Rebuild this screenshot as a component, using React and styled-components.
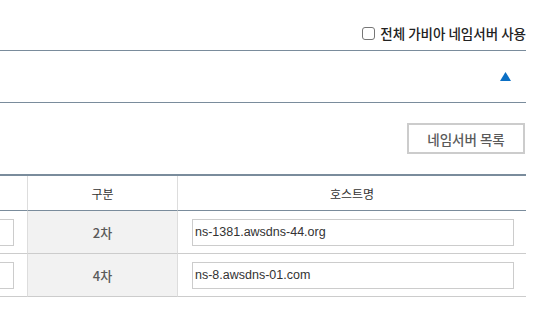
import React from 'react';
import styled, { createGlobalStyle } from 'styled-components';

const GlobalStyle = createGlobalStyle`
  html, body {
    margin: 0;
    padding: 0;
    background: #ffffff;
    overflow: hidden;
  }
  body {
    font-family: "Noto Sans", "Noto Sans CJK KR", sans-serif;
    color: #333333;
  }
`

const Page = styled.div`
  width: 539px;
  height: 322px;
  overflow: hidden;
  display: flex;
  justify-content: flex-end;
  padding-right: 13px;
  box-sizing: border-box;
`

const Panel = styled.div`
  width: 800px;
  flex-shrink: 0;
  display: flex;
  flex-direction: column;
`

const TopBar = styled.div`
  height: 51px;
  box-sizing: border-box;
  padding-top: 21px;
  border-bottom: 1px solid #7a8c9c;
  display: flex;
  justify-content: flex-end;
  align-items: flex-start;
`

const CheckLabel = styled.label`
  display: flex;
  align-items: center;
  height: 24px;
  gap: 5px;
  font-family: "Noto Sans CJK KR", "Noto Sans", sans-serif;
  font-size: 13.5px;
  font-weight: 500;
  color: #222222;

  & > span {
    width: 13px;
    height: 13px;
    box-sizing: border-box;
    border: 1px solid #767676;
    border-radius: 3px;
    background: #fff;
  }
`

const FoldHeader = styled.div`
  height: 52px;
  box-sizing: border-box;
  border-bottom: 1px solid #7a8c9c;
  display: flex;
  justify-content: flex-end;
  align-items: center;
  padding-right: 15px;
`

const Toolbar = styled.div`
  display: flex;
  justify-content: flex-end;
  padding: 20px 1px 20px 0;
`

const Button = styled.button`
  width: 118px;
  height: 31px;
  box-sizing: border-box;
  border: 2px solid #cccccc;
  background: #ffffff;
  font-family: "Noto Sans CJK KR", "Noto Sans", sans-serif;
  font-size: 13.5px;
  font-weight: 500;
  color: #5a5a5a;
  padding: 0;
`

const Grid = styled.div`
  display: grid;
  grid-template-columns: 302px 150px 348px;
  border-top: 2px solid #7a8c9c;
`

const HeadCell = styled.div`
  height: 35px;
  box-sizing: border-box;
  border-bottom: 1px solid #7a8c9c;
  border-right: ${p => (p.last ? 'none' : '1px solid #dddddd')};
  display: flex;
  align-items: center;
  justify-content: center;
  font-family: "Noto Sans CJK KR", "Noto Sans", sans-serif;
  font-size: 12px;
  color: #333333;
`

const Cell = styled.div`
  height: 43px;
  box-sizing: border-box;
  border-bottom: 1px solid #cccccc;
  border-right: ${p => (p.last ? 'none' : '1px solid #dddddd')};
  background: ${p => (p.shaded ? '#f2f2f2' : '#ffffff')};
  display: flex;
  align-items: center;
  justify-content: ${p => (p.center ? 'center' : 'flex-start')};
  padding: ${p => p.pad || '0'};
  font-family: "Noto Sans CJK KR", "Noto Sans", sans-serif;
  font-size: 13px;
  font-weight: 500;
  color: #5a5a5a;
`

const TextInput = styled.input`
  width: 100%;
  height: 27px;
  box-sizing: border-box;
  border: 1px solid #cccccc;
  padding: 0 2px;
  font-family: "Liberation Sans", Arial, sans-serif;
  font-size: 12.5px;
  color: #333333;
  background: #fff;
  outline: none;
`

const rows = [
  { order: '2차', host: 'ns-1381.awsdns-44.org' },
  { order: '4차', host: 'ns-8.awsdns-01.com' },
]

export default function App() {
  return (
    <Page>
      <GlobalStyle />
      <Panel>
        <TopBar>
          <CheckLabel>
            <span />
            전체 가비아 네임서버 사용
          </CheckLabel>
        </TopBar>
        <FoldHeader>
          <svg width="11" height="9" viewBox="0 0 11 9">
            <polygon points="5.5,0 11,9 0,9" fill="#0b6fc4" />
          </svg>
        </FoldHeader>
        <Toolbar>
          <Button>네임서버 목록</Button>
        </Toolbar>
        <Grid>
          <HeadCell />
          <HeadCell>구분</HeadCell>
          <HeadCell last>호스트명</HeadCell>
          {rows.map((row, i) => (
            <React.Fragment key={i}>
              <Cell pad="0 13px 0 14px">
                <TextInput defaultValue="" readOnly />
              </Cell>
              <Cell shaded center>{row.order}</Cell>
              <Cell last pad="0 12px 0 14px">
                <TextInput defaultValue={row.host} readOnly />
              </Cell>
            </React.Fragment>
          ))}
        </Grid>
      </Panel>
    </Page>
  );
}
